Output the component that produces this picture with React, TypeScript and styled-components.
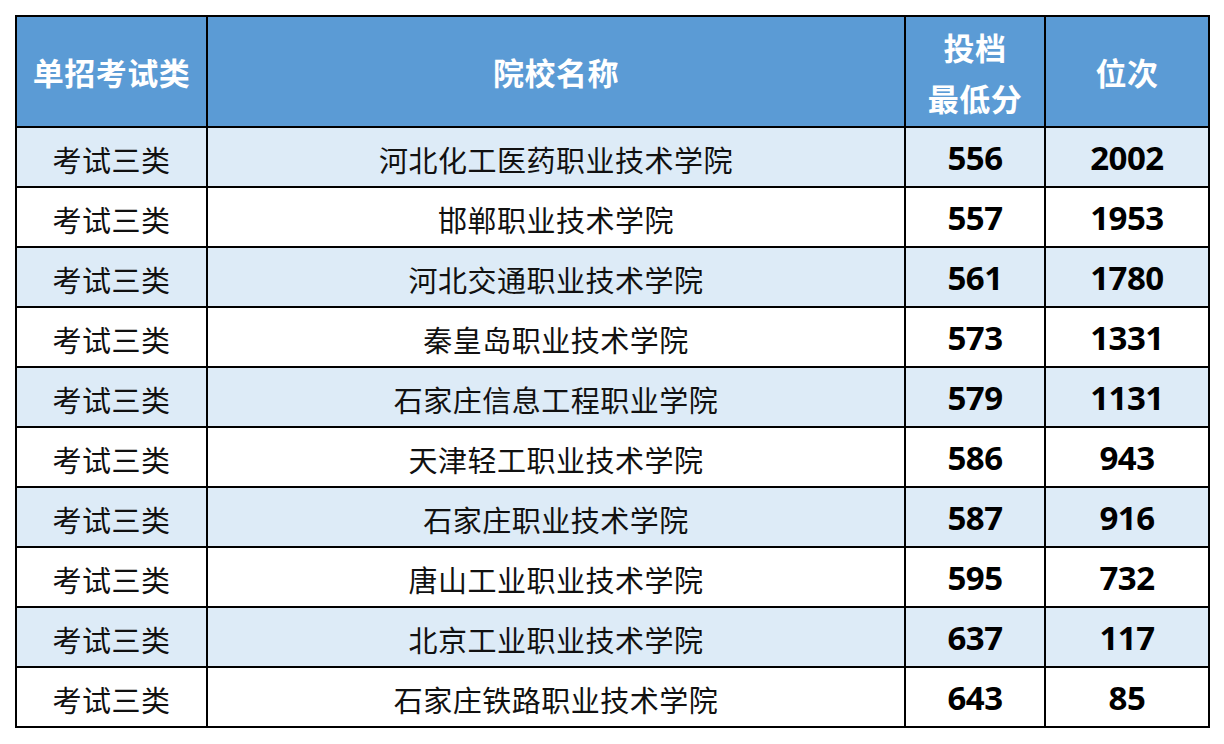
import React from 'react';
import styled, { createGlobalStyle } from 'styled-components';

const GlobalStyle = createGlobalStyle`
  html, body {
    margin: 0;
    padding: 0;
    background: #ffffff;
  }
  body {
    font-family: "Noto Sans CJK SC", "Noto Sans", sans-serif;
  }
`;

const Page = styled.div`
  width: 1224px;
  height: 744px;
  box-sizing: border-box;
  padding: 15px 0 0 15px;
  background: #ffffff;
`;

const Table = styled.div`
  display: grid;
  grid-template-columns: 189px 696px 138px 162px;
  grid-template-rows: 109px repeat(10, 58px);
  gap: 2px;
  width: max-content;
  padding: 2px;
  background: #000000;
`;

const HeadCell = styled.div`
  display: flex;
  align-items: center;
  justify-content: center;
  background: #5b9bd5;
  color: #ffffff;
  font-family: "Noto Sans CJK SC", sans-serif;
  font-size: 31px;
  font-weight: 700;
  line-height: 51px;
  text-align: center;
  letter-spacing: 0.5px;
`;

const Cell = styled.div<{ $shaded: boolean }>`
  display: flex;
  align-items: center;
  justify-content: center;
  padding-top: 4px;
  box-sizing: border-box;
  background: ${(p) => (p.$shaded ? '#ddebf7' : '#ffffff')};
  color: #111111;
  font-family: "Noto Sans CJK SC", sans-serif;
  font-size: 29px;
  font-weight: 400;
  letter-spacing: 0.5px;
  white-space: nowrap;
`;

const NumCell = styled(Cell)`
  padding-top: 0;
  font-family: "Noto Sans", "Open Sans", sans-serif;
  font-size: 33px;
  font-weight: 700;
  letter-spacing: -0.5px;
  color: #000000;
`;

const rows = [
  { name: '河北化工医药职业技术学院', score: 556, rank: 2002 },
  { name: '邯郸职业技术学院', score: 557, rank: 1953 },
  { name: '河北交通职业技术学院', score: 561, rank: 1780 },
  { name: '秦皇岛职业技术学院', score: 573, rank: 1331 },
  { name: '石家庄信息工程职业学院', score: 579, rank: 1131 },
  { name: '天津轻工职业技术学院', score: 586, rank: 943 },
  { name: '石家庄职业技术学院', score: 587, rank: 916 },
  { name: '唐山工业职业技术学院', score: 595, rank: 732 },
  { name: '北京工业职业技术学院', score: 637, rank: 117 },
  { name: '石家庄铁路职业技术学院', score: 643, rank: 85 },
];

export default function App() {
  return (
    <Page>
      <GlobalStyle />
      <Table>
        <HeadCell>单招考试类</HeadCell>
        <HeadCell>院校名称</HeadCell>
        <HeadCell>
          投档
          <br />
          最低分
        </HeadCell>
        <HeadCell>位次</HeadCell>
        {rows.map((r, i) => {
          const shaded = i % 2 === 0;
          return (
            <React.Fragment key={r.name}>
              <Cell $shaded={shaded}>考试三类</Cell>
              <Cell $shaded={shaded}>{r.name}</Cell>
              <NumCell $shaded={shaded}>{r.score}</NumCell>
              <NumCell $shaded={shaded}>{r.rank}</NumCell>
            </React.Fragment>
          );
        })}
      </Table>
    </Page>
  );
}
